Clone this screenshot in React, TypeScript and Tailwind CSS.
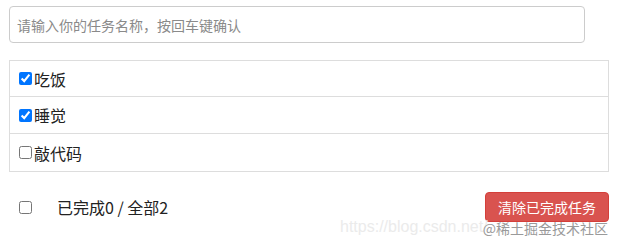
import { useState } from "react";

type Todo = { id: number; name: string; done: boolean };

const font = "font-['Microsoft_YaHei','Noto_Sans_CJK_SC',sans-serif]";

export default function App() {
    const [todos, setTodos] = useState<Todo[]>([
        { id: 1, name: "吃饭", done: true },
        { id: 2, name: "睡觉", done: true },
        { id: 3, name: "敲代码", done: false },
    ]);

    const toggle = (id: number) =>
        setTodos(todos.map((t) => (t.id === id ? { ...t, done: !t.done } : t)));

    return (
        <div className={`relative h-[247px] w-[621px] bg-white ${font}`}>
            <div className="ml-[9px] w-[600px] pt-[6px]">
                {/* header */}
                <input
                    type="text"
                    placeholder="请输入你的任务名称，按回车键确认"
                    className="block h-[37px] w-[576px] rounded-[4px] border border-[#cccccc] pl-[7px] text-[14px] text-[#333] outline-none placeholder:text-[#8a8a8a]"
                />

                {/* list */}
                <ul className="mt-[17px] border border-[#dddddd] divide-y divide-[#dddddd]">
                    {todos.map((todo) => (
                        <li
                            key={todo.id}
                            className="flex h-[37px] items-center pl-[9px] text-[16px] text-[#222] first:h-[36px]"
                        >
                            <input
                                type="checkbox"
                                checked={todo.done}
                                onChange={() => toggle(todo.id)}
                                className="mr-[2px] h-[13px] w-[13px]"
                            />
                            <span className="leading-none">{todo.name}</span>
                        </li>
                    ))}
                </ul>

                {/* footer */}
                <div className="mt-[20px] flex h-[30px] items-center pl-[10px]">
                    <input type="checkbox" className="h-[13px] w-[13px]" />
                    <span className="ml-[25px] text-[16px] leading-none text-[#222]">
                        已完成0 / 全部2
                    </span>
                    <button className="ml-auto h-[30px] rounded-[4px] border border-[#d43f3a] bg-[#d9534f] px-[12px] text-[14px] leading-none text-white">
                        清除已完成任务
                    </button>
                </div>
            </div>

            {/* watermark */}
            <span className="pointer-events-none absolute left-[340px] top-[219px] font-['Liberation_Sans',sans-serif] text-[16px] leading-none text-[#ebebeb]">
                https://blog.csdn.net/
            </span>
            <span className="pointer-events-none absolute right-[13px] top-[221px] text-[14px] leading-none text-[#9a9a9a]">
                @稀土掘金技术社区
            </span>
        </div>
    );
}
